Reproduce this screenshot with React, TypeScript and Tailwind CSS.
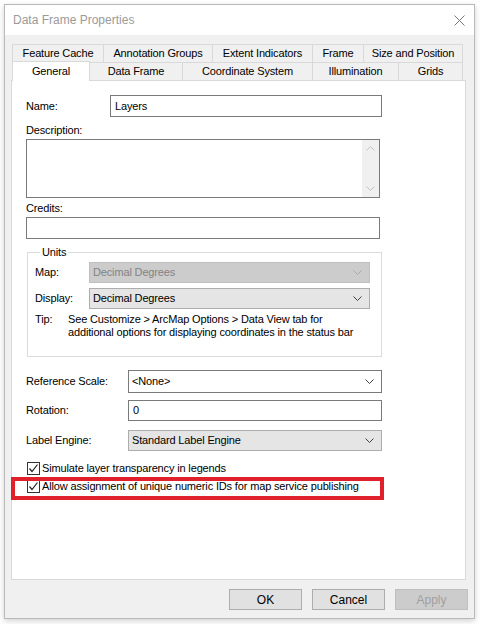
import { ReactNode } from "react";

const backTabs = [
  { label: "Feature Cache", w: "w-[91px]" },
  { label: "Annotation Groups", w: "w-[109px]" },
  { label: "Extent Indicators", w: "w-[100px]" },
  { label: "Frame", w: "w-[51px]" },
  { label: "Size and Position", w: "w-[100px]" },
];

const frontTabs = [
  { label: "Data Frame", w: "w-[92px]" },
  { label: "Coordinate System", w: "w-[130px]" },
  { label: "Illumination", w: "w-[86px]" },
  { label: "Grids", w: "w-[65px]" },
];

function Chevron({ color = "#404040" }: { color?: string }) {
  return (
    <svg width="9" height="5" viewBox="0 0 9 5" className="shrink-0">
      <path d="M0.5 0.5 L4.5 4.5 L8.5 0.5" fill="none" stroke={color} strokeWidth="1" />
    </svg>
  );
}

function Check() {
  return (
    <div className="w-[13px] h-[13px] border border-[#333] bg-white flex items-center justify-center shrink-0">
      <svg width="11" height="11" viewBox="0 0 11 11">
        <path d="M1.5 5.5 L4 8.5 L9.5 1.5" fill="none" stroke="#222" strokeWidth="1.2" />
      </svg>
    </div>
  );
}

function Combo({
  value,
  width,
  tone,
}: {
  value: string;
  width: string;
  tone: "edit" | "list" | "off";
}) {
  const look =
    tone === "edit"
      ? "bg-white border-[#7a7a7a] text-black"
      : tone === "list"
        ? "bg-[#e5e5e5] border-[#adadad] text-black"
        : "bg-[#cccccc] border-[#bfbfbf] text-[#838383]";
  return (
    <div className={`${width} h-full border ${look} flex items-center justify-between pl-[3px] pr-[7px]`}>
      <span>{value}</span>
      <Chevron color={tone === "off" ? "#a8a8a8" : "#404040"} />
    </div>
  );
}

function Row({ label, labelW, children, h }: { label: string; labelW: string; children: ReactNode; h: string }) {
  return (
    <div className={`flex items-center ${h}`}>
      <span className={`${labelW} shrink-0`}>{label}</span>
      {children}
    </div>
  );
}

export default function App() {
  return (
    <div className="w-[480px] h-[624px] bg-white pt-[4px] pl-[4px] font-['Liberation_Sans',Arial,sans-serif] text-[11px] tracking-[-0.15px] text-black">
      <div className="w-[471px] h-[615px] border border-[#b9b9b9] bg-[#f0f0f0] flex flex-col shadow-[0_2px_6px_rgba(0,0,0,0.18)]">
        {/* title bar */}
        <div className="h-[30px] bg-white flex items-center justify-between pl-[8px] pr-[9px] shrink-0">
          <span className="text-[12px] tracking-normal text-[#9a9a9a]">Data Frame Properties</span>
          <svg width="11" height="11" viewBox="0 0 11 11">
            <path d="M0.5 0.5 L10.5 10.5 M10.5 0.5 L0.5 10.5" stroke="#777" strokeWidth="1" />
          </svg>
        </div>

        <div className="flex-1 pl-[6px] pt-[9px] flex flex-col">
          {/* tab strip */}
          <div className="ml-[1px] flex flex-col">
            <div className="flex h-[18px]">
              {backTabs.map((t, i) => (
                <div
                  key={t.label}
                  className={`${t.w} border-t border-l border-[#d9d9d9] ${i === backTabs.length - 1 ? "border-r" : ""} flex items-center justify-center`}
                >
                  {t.label}
                </div>
              ))}
            </div>
            <div className="flex h-[18px] items-end">
              <div className="w-[78px] h-[20px] -mb-px relative z-10 bg-white border border-b-0 border-[#d9d9d9] flex items-start justify-center pt-[1px]">
                General
              </div>
              {frontTabs.map((t, i) => (
                <div
                  key={t.label}
                  className={`${t.w} h-[18px] border-t ${i === 0 ? "" : "border-l"} ${i === frontTabs.length - 1 ? "border-r" : ""} border-[#d9d9d9] flex items-center justify-center`}
                >
                  {t.label}
                </div>
              ))}
            </div>
          </div>

          {/* tab page */}
          <div className="w-[455px] h-[500px] bg-white border border-[#d9d9d9] relative pl-[14px] pt-[14px]">
            <Row label="Name:" labelW="w-[84px]" h="h-[22px]">
              <div className="w-[272px] h-full border border-[#7a7a7a] flex items-center pl-[4px]">Layers</div>
            </Row>

            <div className="mt-[6px] h-[14px] leading-[14px]">Description:</div>
            <div className="mt-[2px] w-[354px] h-[59px] border border-[#7a7a7a] flex justify-end">
              <div className="w-[17px] h-full bg-[#f0f0f0] flex flex-col items-center justify-between py-[6px]">
                <svg width="9" height="5" viewBox="0 0 9 5">
                  <path d="M0.5 4.5 L4.5 0.5 L8.5 4.5" fill="none" stroke="#c2c2c2" strokeWidth="1" />
                </svg>
                <Chevron color="#c2c2c2" />
              </div>
            </div>

            <div className="mt-[3px] h-[14px] leading-[14px]">Credits:</div>
            <div className="mt-[2px] w-[354px] h-[22px] border border-[#7a7a7a]" />

            {/* units group */}
            <fieldset className="mt-[6px] ml-[1px] w-[355px] border border-[#dcdcdc] pl-[7px] pb-[17px]">
              <legend className="ml-[5px] px-[2px] h-[14px] leading-[14px]">Units</legend>
              <div className="mt-[3px]">
                <Row label="Map:" labelW="w-[54px]" h="h-[21px]">
                  <Combo value="Decimal Degrees" width="w-[281px]" tone="off" />
                </Row>
              </div>
              <div className="mt-[5px]">
                <Row label="Display:" labelW="w-[54px]" h="h-[21px]">
                  <Combo value="Decimal Degrees" width="w-[281px]" tone="list" />
                </Row>
              </div>
              <div className="mt-[4px] flex leading-[13px]">
                <span className="w-[33px] shrink-0">Tip:</span>
                <span>
                  See Customize &gt; ArcMap Options &gt; Data View tab for
                  <br />
                  additional options for displaying coordinates in the status bar
                </span>
              </div>
            </fieldset>

            <div className="mt-[13px]">
              <Row label="Reference Scale:" labelW="w-[102px]" h="h-[23px]">
                <Combo value="<None>" width="w-[254px]" tone="edit" />
              </Row>
            </div>
            <div className="mt-[7px]">
              <Row label="Rotation:" labelW="w-[102px]" h="h-[21px]">
                <div className="w-[254px] h-full border border-[#7a7a7a] flex items-center pl-[4px]">0</div>
              </Row>
            </div>
            <div className="mt-[9px]">
              <Row label="Label Engine:" labelW="w-[102px]" h="h-[21px]">
                <Combo value="Standard Label Engine" width="w-[254px]" tone="list" />
              </Row>
            </div>

            <div className="mt-[9px] ml-[1px] h-[16px] flex items-center gap-[2px]">
              <Check />
              <span>Simulate layer transparency in legends</span>
            </div>
            <div className="mt-[2px] ml-[1px] h-[16px] flex items-center gap-[2px]">
              <Check />
              <span>Allow assignment of unique numeric IDs for map service publishing</span>
            </div>

            {/* highlight frame drawn over the second option */}
            <div className="absolute left-[-1px] top-[396px] w-[373px] h-[23px] border-4 border-[#e0202b]" />
          </div>

          {/* dialog buttons */}
          <div className="mt-[9px] flex justify-end gap-[10px] pr-[6px] text-[12px] tracking-normal">
            <div className="w-[73px] h-[21px] bg-[#e1e1e1] border border-[#adadad] flex items-center justify-center">OK</div>
            <div className="w-[73px] h-[21px] bg-[#e1e1e1] border border-[#adadad] flex items-center justify-center">Cancel</div>
            <div className="w-[73px] h-[21px] bg-[#cccccc] border border-[#bfbfbf] text-[#a0a0a0] flex items-center justify-center">Apply</div>
          </div>
        </div>
      </div>
    </div>
  );
}
